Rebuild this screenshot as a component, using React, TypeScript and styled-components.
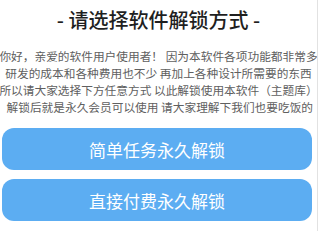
import React from 'react';
import styled, { createGlobalStyle } from 'styled-components';

const GlobalStyle = createGlobalStyle`
  html, body {
    margin: 0;
    padding: 0;
    background: #ffffff;
    overflow: hidden;
  }
`;

const lines = [
  '你好，亲爱的软件用户使用者！ 因为本软件各项功能都非常多',
  '研发的成本和各种费用也不少 再加上各种设计所需要的东西',
  '所以请大家选择下方任意方式 以此解锁使用本软件（主题库）',
  ' 解锁后就是永久会员可以使用 请大家理解下我们也要吃饭的',
];

const App: React.FC = () => {
  return (
    <>
      <GlobalStyle />
      <Page>
        <Title>- 请选择软件解锁方式 -</Title>
        <Notice>
          {lines.map((line, i) => (
            <Line key={i}>{line}</Line>
          ))}
        </Notice>
        <Buttons>
          <UnlockButton type="button">简单任务永久解锁</UnlockButton>
          <UnlockButton type="button">直接付费永久解锁</UnlockButton>
        </Buttons>
      </Page>
    </>
  );
};

export default App;

/* ----------------------- */
/* Styled Components       */
/* ----------------------- */

const Page = styled.div`
  width: 317px;
  height: 231px;
  border-right: 1px solid #e2e2e2;
  display: flex;
  flex-direction: column;
  align-items: center;
  font-family: 'Noto Sans CJK SC', 'Noto Sans', sans-serif;
  overflow: hidden;
`;

const Title = styled.h1`
  margin: 6px 0 0;
  font-size: 20px;
  font-weight: 500;
  line-height: 28px;
  color: #1f1f1f;
  white-space: nowrap;
`;

const Notice = styled.div`
  margin-top: 13px;
  display: flex;
  flex-direction: column;
  align-items: center;
`;

const Line = styled.p`
  margin: 0;
  font-size: 11.7px;
  line-height: 17px;
  color: #606060;
  white-space: pre;
`;

const Buttons = styled.div`
  margin-top: 13px;
  align-self: stretch;
  display: flex;
  flex-direction: column;
  gap: 9px;
  padding: 0 5px 0 2px;
`;

const UnlockButton = styled.button`
  height: 42px;
  border: none;
  border-radius: 12px;
  background-color: #5cadf2;
  color: #ffffff;
  font-family: inherit;
  font-size: 17px;
  cursor: pointer;
`;
